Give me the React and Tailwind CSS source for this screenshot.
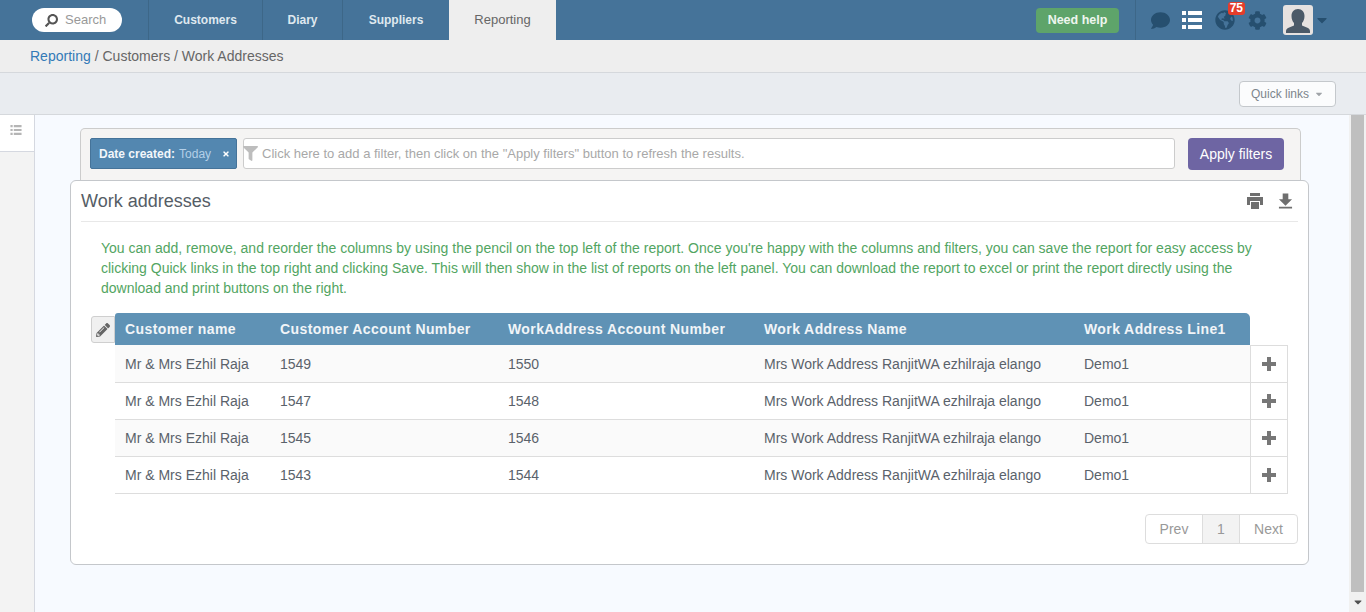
import { FaComment, FaGlobeAmericas, FaCog, FaPencilAlt, FaFilter, FaSearch, FaCaretDown, FaTimes } from "react-icons/fa";

const rows = [
  ["1549", "1550"],
  ["1547", "1548"],
  ["1545", "1546"],
  ["1543", "1544"],
];

const ListIcon = ({ className }) => (
  <svg viewBox="0 0 20 18" className={className} fill="currentColor">
    <path d="M0 0h4v4H0zM6 0h14v4H6zM0 7h4v4H0zM6 7h14v4H6zM0 14h4v4H0zM6 14h14v4H6z" />
  </svg>
);

const PrintIcon = ({ className }) => (
  <svg viewBox="0 0 16 16" className={className} fill="currentColor">
    <path d="M3 0h10v3H3zM0 4h16v8h-3V8H3v4H0zM4 9h8v7H4z" />
  </svg>
);

const DownloadIcon = ({ className }) => (
  <svg viewBox="0 0 16 16" className={className} fill="currentColor">
    <path d="M5 0h6v6h4l-7 7-7-7h4zM1 14h14v2H1z" />
  </svg>
);

const PlusIcon = ({ className }) => (
  <svg viewBox="0 0 14 14" className={className} fill="currentColor">
    <path d="M5 0h4v5h5v4H9v5H5V9H0V5h5z" />
  </svg>
);

const BustIcon = ({ className }) => (
  <svg viewBox="0 0 30 30" className={className} fill="currentColor">
    <path d="M15 4c4 0 6.500 3 6.500 7 0 3-1 5.500-2.500 7v2.500l6 2.500c1.500.7 2 2 2 3.500V28H3v-1.500c0-1.500.5-2.800 2-3.500l6-2.500V18c-1.500-1.500-2.500-4-2.500-7 0-4 2.500-7 6.500-7z" />
  </svg>
);

const App = () => {
  return (
    <div className="flex h-screen flex-col overflow-hidden bg-[#f7faff] font-['Liberation_Sans',Arial,sans-serif] text-sm text-[#5a626b]">
      <header className="flex h-10 shrink-0 items-stretch bg-[#457399]">
        <div className="flex w-[148px] shrink-0 items-center justify-end pr-[26px]">
          <div className="flex h-6 w-[90px] items-center gap-[7px] rounded-full bg-white pl-[13px] text-[13px] text-[#999]">
            <FaSearch className="h-[13px] w-[13px] -scale-x-100 text-[#555]" />
            Search
          </div>
        </div>
        <nav className="flex items-stretch border-l border-[#3d6788] text-xs font-bold text-[#dfe8ef]">
          <a className="flex w-[114px] items-center justify-center border-r border-[#3d6788]">Customers</a>
          <a className="flex w-[80px] items-center justify-center border-r border-[#3d6788]">Diary</a>
          <a className="flex w-[106px] items-center justify-center">Suppliers</a>
          <a className="flex w-[107px] items-center justify-center bg-[#eeeeee] text-[13px] font-normal text-[#666]">Reporting</a>
        </nav>
        <div className="ml-auto flex items-center">
          <button className="mr-4 h-[25px] w-[83px] rounded-sm bg-[#5ea46a] pt-px text-[12.5px] font-bold text-[#eef6ef]">Need help</button>
          <div className="flex h-full items-center border-l border-[#3d6788] pl-[15px] pr-[38px]">
            <FaComment className="h-[19px] w-[19px] text-[#264f6f]" />
            <ListIcon className="ml-[12px] h-[18px] w-5 text-white" />
            <div className="relative ml-[13px]">
              <FaGlobeAmericas className="h-5 w-5 text-[#264f6f]" />
              <span className="absolute -right-[10px] -top-[8px] rounded-[3px] bg-[#e53d2b] px-[2px] text-xs font-bold leading-[13px] text-white">75</span>
            </div>
            <FaCog className="ml-[13px] h-[19px] w-[19px] text-[#264f6f]" />
            <div className="ml-4 flex h-[30px] w-[30px] items-end justify-center overflow-hidden rounded-[3px] bg-[#e6e2e0]">
              <BustIcon className="h-[30px] w-[30px] text-[#4b5a68]" />
            </div>
            <FaCaretDown className="ml-[3px] h-4 w-3 text-[#264f6f]" />
          </div>
        </div>
      </header>

      <div className="flex h-[33px] shrink-0 items-center border-b border-[#d5d8dc] bg-[#eeeeee] pl-[30px] text-sm">
        <a className="text-[#337ab7]">Reporting</a>
        <span className="ml-1 text-[#666]">/ Customers / Work Addresses</span>
      </div>

      <div className="flex h-[42px] shrink-0 items-center justify-end border-b border-[#d5d8dc] bg-[#e9ecf0] pr-[30px]">
        <button className="flex h-[26px] w-[97px] items-center justify-center gap-[5px] rounded-[4px] border border-[#c4c8cc] bg-[#fbfcfd] text-xs text-[#7d858c]">
          Quick links
          <FaCaretDown className="h-[10px] w-[10px] text-[#a0a4a8]" />
        </button>
      </div>

      <div className="flex min-h-0 flex-1">
        <aside className="w-[35px] shrink-0 border-r border-[#d5d8e0] bg-[#f3f3f3]">
          <div className="flex h-[37px] items-center justify-center border-b border-[#d5d8e0] bg-white pb-[6px] pr-[3px]">
            <ListIcon className="h-[10px] w-3 text-[#b5b5b5]" />
          </div>
        </aside>

        <main className="min-w-0 flex-1 pl-[35px] pr-[40px] pt-[13px]">
          <div className="ml-[10px] mr-2 flex h-[52px] items-start rounded-t-[5px] border border-b-0 border-[#cccccc] bg-[#f5f4f3] pl-[9px] pr-4 pt-[9px]">
            <div className="flex h-[31px] w-[147px] shrink-0 items-center rounded-[2px] border border-[#457399] bg-[#5387b0] pl-2 text-xs">
              <span className="font-bold text-[#f2f6fa]">Date created:</span>
              <span className="ml-1 text-[#b4d0e8]">Today</span>
              <FaTimes className="ml-[11px] h-2 w-2 text-white" />
            </div>
            <div className="ml-[6px] flex h-[31px] min-w-0 flex-1 items-center rounded-[3px] border border-[#cccccc] bg-white text-[13px] text-[#a8a8a8]">
              <FaFilter className="h-[15px] w-[15px] -translate-x-[1px] text-[#bdbdbd]" />
              <span className="ml-[3px] pt-px">Click here to add a filter, then click on the "Apply filters" button to refresh the results.</span>
            </div>
            <button className="ml-[13px] h-8 w-[96px] shrink-0 rounded-[4px] bg-[#6e65a3] text-sm text-white">Apply filters</button>
          </div>

          <section className="h-[385px] rounded-[6px] border border-[#c4c7cb] bg-white px-[10px]">
            <div className="flex h-[41px] items-center justify-between border-b border-[#e8e8e8]">
              <h2 className="text-lg leading-none text-[#555d66]">Work addresses</h2>
              <div className="flex items-center gap-[15px] pb-[1px] pr-[5px] text-[#6f6f6f]">
                <PrintIcon className="h-4 w-4" />
                <DownloadIcon className="h-4 w-[15px]" />
              </div>
            </div>

            <p className="mt-4 pl-5 pr-[45px] leading-5 text-[#52a562]">
              You can add, remove, and reorder the columns by using the pencil on the top left of the report. Once you're happy with the columns and filters, you can save the report for easy access by clicking Quick links in the top right and clicking Save. This will then show in the list of reports on the left panel. You can download the report to excel or print the report directly using the download and print buttons on the right.
            </p>

            <div className="relative ml-[34px] mt-[15px] w-[1172px]">
              <button className="absolute -left-6 top-[3px] flex h-[27px] w-6 items-center justify-center rounded-l-[3px] border border-[#cfcfcf] bg-[#f0f0f0] text-[#666]">
                <FaPencilAlt className="h-[14px] w-[14px]" />
              </button>
              <table className="w-full table-fixed border-collapse">
                <colgroup>
                  <col className="w-[155px]" />
                  <col className="w-[228px]" />
                  <col className="w-[256px]" />
                  <col className="w-[320px]" />
                  <col className="w-[176px]" />
                  <col className="w-[37px]" />
                </colgroup>
                <thead>
                  <tr className="h-8 text-left text-sm font-bold tracking-[0.4px] text-[#f1f5f8]">
                    <th className="rounded-tl-[3px] bg-[#5f92b5] pl-[10px]">Customer name</th>
                    <th className="bg-[#5f92b5] pl-[10px]">Customer Account Number</th>
                    <th className="bg-[#5f92b5] pl-[10px]">WorkAddress Account Number</th>
                    <th className="bg-[#5f92b5] pl-[10px]">Work Address Name</th>
                    <th className="rounded-tr-[5px] bg-[#5f92b5] pl-[10px]">Work Address Line1</th>
                    <th />
                  </tr>
                </thead>
                <tbody>
                  {rows.map(([account, workAccount], index) => (
                    <tr key={account} className={`h-[37px] border-b border-[#dddddd] ${index % 2 === 0 ? "bg-[#fafafa] pt-px" : "bg-white"}`}>
                      <td className="pl-[10px] pt-px">Mr &amp; Mrs Ezhil Raja</td>
                      <td className="pl-[10px] pt-px">{account}</td>
                      <td className="pl-[10px] pt-px">{workAccount}</td>
                      <td className="pl-[10px] pt-px">Mrs Work Address RanjitWA ezhilraja elango</td>
                      <td className="pl-[10px] pt-px">Demo1</td>
                      <td className="border border-[#dddddd] bg-white">
                        <PlusIcon className="mx-auto h-[14px] w-[14px] text-[#777]" />
                      </td>
                    </tr>
                  ))}
                </tbody>
              </table>
            </div>

            <div className="mt-5 flex justify-end">
              <div className="flex h-[30px] rounded-[4px] border border-[#dddddd] text-sm text-[#999]">
                <span className="flex w-[56px] items-center justify-center">Prev</span>
                <span className="flex w-[38px] items-center justify-center border-x border-[#dddddd] bg-[#f3f3f3]">1</span>
                <span className="flex w-[57px] items-center justify-center">Next</span>
              </div>
            </div>
          </section>
        </main>

        <div className="flex w-[17px] shrink-0 flex-col bg-[#f1f1f1] px-[2px]">
          <div className="flex-1 bg-[#bfbfbf]" />
          <div className="flex h-5 items-center justify-center">
            <FaCaretDown className="h-3 w-3 text-[#505050]" />
          </div>
        </div>
      </div>
    </div>
  );
};

export default App;
